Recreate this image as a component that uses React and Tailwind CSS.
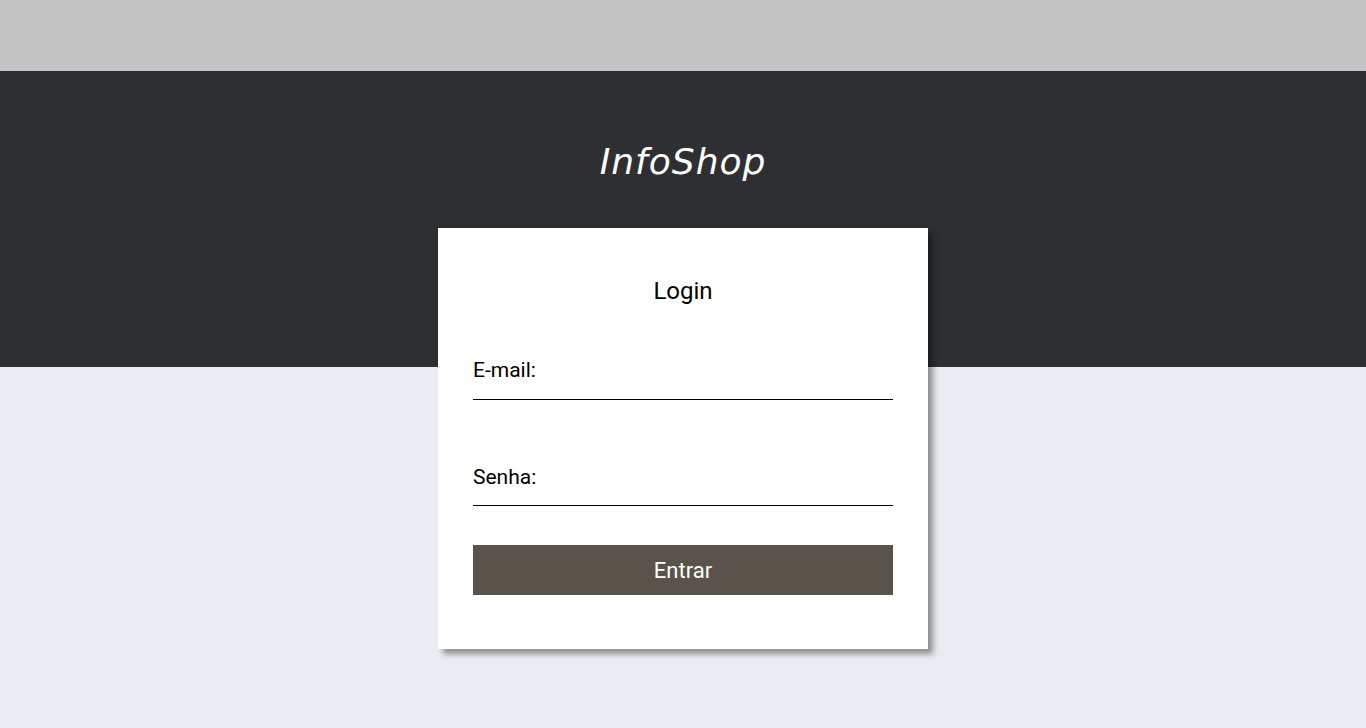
const Login = () => {
  return (
    <div className="min-h-screen bg-[#e9ecf1] font-['Roboto',sans-serif]">
      {/* Top bar */}
      <div className="h-[71px] bg-[#c4c4c4]" />

      {/* Dark header with logo */}
      <div className="h-[296px] bg-[#2e2f33] pt-[69px]">
        <h1 className="text-center text-[36px] leading-[44px] italic tracking-[1px] text-white font-['DejaVu_Sans',sans-serif]">
          InfoShop
        </h1>
      </div>

      {/* Card */}
      <div className="flex justify-center -mt-[139px]">
        <form className="w-[490px] bg-white px-[35px] pt-[49px] pb-[54px] shadow-[5px_5px_6px_rgba(0,0,0,0.4)]">
          <h2 className="text-center text-[24px] leading-[28px] text-black">Login</h2>

          <div className="mt-[53px] border-b border-black pb-[17px]">
            <label className="block text-[21px] leading-[24px] text-black">E-mail:</label>
          </div>

          <div className="mt-[65px] border-b border-black pb-[16px]">
            <label className="block text-[21px] leading-[24px] text-black">Senha:</label>
          </div>

          <button
            type="button"
            className="mt-[39px] w-full h-[50px] bg-[#5a534c] text-white text-[22px]"
          >
            Entrar
          </button>
        </form>
      </div>
    </div>
  );
};

export default Login;
